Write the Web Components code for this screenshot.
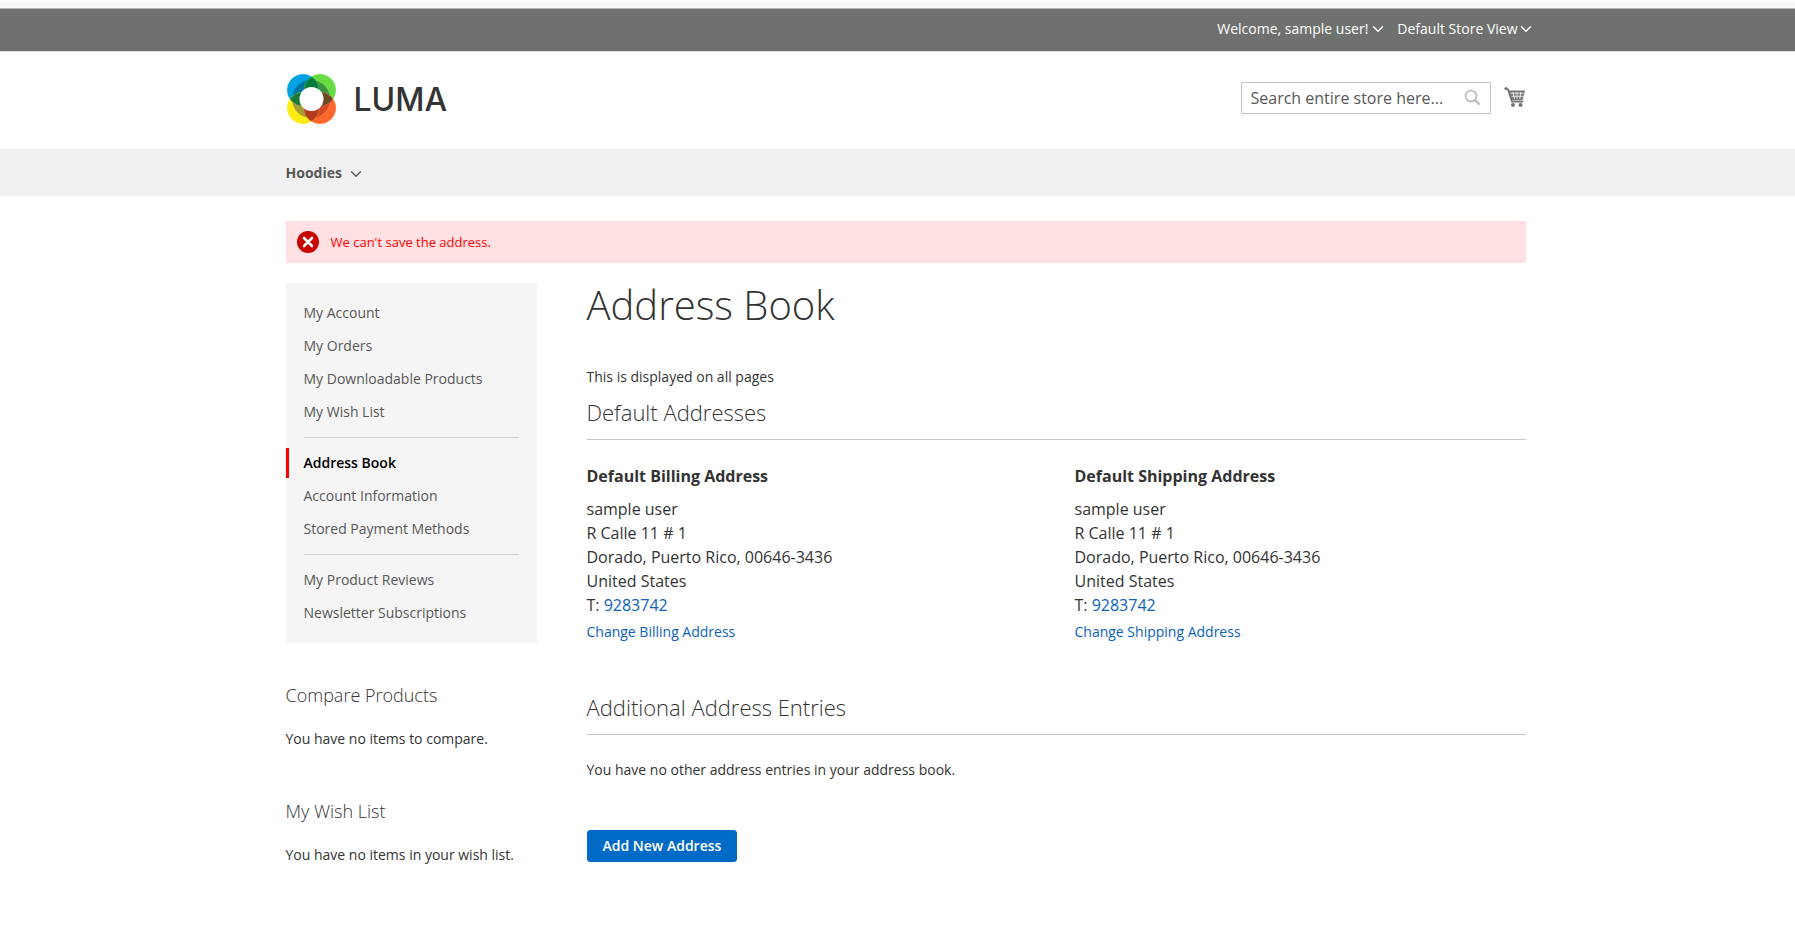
<!DOCTYPE html>
<html lang="en">
<head>
<meta charset="utf-8">
<title>Address Book</title>
<style>
body{margin:0;background:#fff;color:#333;font:14px/20px "Open Sans",sans-serif}
</style>
</head>
<body>
<luma-page></luma-page>
<script>
const define = (name, css, html) => customElements.define(name, class extends HTMLElement {
  constructor() {
    super();
    const t = document.createElement('template');
    t.innerHTML = `<style>*{box-sizing:border-box}:host{display:block}a{color:#0a62bd;text-decoration:none}button{font:inherit;cursor:pointer}${css}</style>${html}`;
    this.attachShadow({mode: 'open'}).append(t.content.cloneNode(true));
  }
});

define('luma-container',
  `:host{padding-left:16px}div{max-width:var(--content-width,1240px);margin:0 auto}`,
  `<div><slot></slot></div>`);

define('luma-chevron',
  `:host{display:inline-flex}svg{display:block;width:var(--chevron-width,12px);height:8px}`,
  `<svg viewBox="0 0 12 8" fill="none" stroke="currentColor" stroke-width="1.4" stroke-linecap="round" stroke-linejoin="round"><path d="M1.500 1.800 6 6.200l4.500-4.400"/></svg>`);

define('luma-topbar',
  `:host{border-top:6px solid #f8f8f8;margin-top:2px}
  .bar{background:#6e716e;border-top:1px solid #b5b7b5;border-bottom:1px solid #dcdddc;--content-width:1252px}
  .row{display:flex;justify-content:flex-end;gap:13px;height:42px;align-items:center}
  button{display:flex;align-items:center;gap:4px;background:none;border:0;padding:0 0 2px;color:#fff}
  .store{gap:2px}`,
  `<div class="bar"><luma-container><div class="row">
    <button type="button">Welcome, sample user! <luma-chevron></luma-chevron></button>
    <button class="store" type="button">Default Store View <luma-chevron></luma-chevron></button>
  </div></luma-container></div>`);

define('luma-logo',
  `a{display:flex;align-items:center;gap:16px;color:#333;font:500 32px/48px Inter,sans-serif}svg{display:block}span{padding-top:4px}`,
  `<a href="#" aria-label="Luma home"><svg width="52" height="52" viewBox="1 0 52 52">
    <defs><clipPath id="ring"><circle cx="26" cy="27" r="19"/></clipPath>
    <clipPath id="blue"><circle cx="18" cy="18" r="16"/></clipPath>
    <clipPath id="orange"><circle cx="35" cy="36" r="16"/></clipPath></defs>
    <circle cx="18" cy="18" r="16" fill="#00a4e4"/><circle cx="35" cy="18" r="16" fill="#69db45"/>
    <circle cx="18" cy="36" r="16" fill="#ffeb14"/><circle cx="35" cy="36" r="16" fill="#ff682c"/>
    <g clip-path="url(#ring)">
      <circle cx="18" cy="18" r="16" fill="#0075a2"/><circle cx="35" cy="18" r="16" fill="#3c9440"/>
      <circle cx="18" cy="36" r="16" fill="#a89b33"/><circle cx="35" cy="36" r="16" fill="#d04a25"/>
    </g>
    <g clip-path="url(#blue)"><circle cx="35" cy="18" r="16" fill="#007c3c"/><circle cx="18" cy="36" r="16" fill="#177a36"/></g>
    <g clip-path="url(#orange)"><circle cx="35" cy="18" r="16" fill="#6c4a20"/><circle cx="18" cy="36" r="16" fill="#b33a1b"/></g>
    <g fill="none" stroke="#fff" stroke-opacity=".25" stroke-width=".7"><circle cx="18" cy="18" r="16"/><circle cx="35" cy="18" r="16"/><circle cx="18" cy="36" r="16"/><circle cx="35" cy="36" r="16"/></g>
    <circle cx="26.500" cy="27" r="12" fill="#fff"/></svg><span>LUMA</span></a>`);

define('luma-search',
  `:host{width:250px}form{display:flex;position:relative}
  input{width:100%;height:32px;border:1px solid #c2c2c2;border-radius:1px;padding:0 35px 0 9px;font:16px/24px "Open Sans",sans-serif;color:#575757;background:#fff}
  input::placeholder{color:#575757;opacity:1}
  button{position:absolute;right:10px;top:7px;padding:0;border:0;background:none;display:flex}`,
  `<form><input type="text" aria-label="Search" placeholder="Search entire store here...">
  <button type="button" aria-label="Search"><svg width="17" height="17" viewBox="0 0 17 17" fill="none" stroke="#b8b8b8" stroke-width="1.600"><circle cx="7" cy="7" r="5.500"/><path d="m11 11 4.500 4.500" stroke-width="2.200"/></svg></button></form>`);

define('luma-header',
  `.row{display:flex;align-items:center;height:97px;padding-bottom:5px}luma-logo{flex:1}
  .cart{display:flex;margin-left:13px}`,
  `<luma-container><div class="row"><luma-logo></luma-logo><luma-search></luma-search>
  <a class="cart" href="#" aria-label="My Cart"><svg width="22" height="22" viewBox="0 0 22 22"><path d="M1.500 1.500 4 2.500l4 12h10.500" fill="none" stroke="#757575" stroke-width="1.800" stroke-linecap="round"/><circle cx="2" cy="1.500" r="1.500" fill="#757575"/><path d="M4.500 3.500H21l-2.500 9.500H7.500z" fill="#757575"/><path d="M6.500 6.200h13M7.500 9.300h11.500M9 5l1.500 7M13 5v7M16.800 5l-1 7" fill="none" stroke="#fff" stroke-width=".8"/><circle cx="9" cy="18" r="2" fill="#757575"/><circle cx="16.500" cy="18" r="2" fill="#757575"/></svg></a></div></luma-container>`);

define('luma-nav',
  `:host{background:#f0f0f0}nav{display:flex;align-items:center;height:47px;--chevron-width:14px}
  a{display:flex;align-items:center;gap:7px;font-weight:700;color:#575757}luma-chevron{margin-top:2px}svg{height:9px}`,
  `<luma-container><nav><a href="#">Hoodies <luma-chevron></luma-chevron></a></nav></luma-container>`);

define('luma-message',
  `:host{margin-top:25px}div{display:flex;align-items:center;gap:12px;padding:12px 11px;background:#ffe1e3;color:#f00;font-size:13px;line-height:18px}
  svg{display:block;margin:-2px 0}`,
  `<div role="alert"><svg width="22" height="22" viewBox="0 0 22 22"><circle cx="11" cy="11" r="11" fill="#c70000"/><path d="m7 7 8 8m0-8-8 8" stroke="#fff" stroke-width="2.600" stroke-linecap="round"/></svg><span><slot></slot></span></div>`);

define('account-nav',
  `:host{background:#f5f5f5;padding:15px 0}ul{list-style:none;margin:0;padding:0;display:grid;row-gap:3px}
  ul+ul::before{content:"";height:1px;background:#d1d1d1;margin:7px 18px}ul+ul{padding-top:3px}
  a{display:block;color:#575757;padding:5px 15px;border-left:3px solid transparent}
  a[aria-current]{border-color:#f00;color:#000;font-weight:600}`,
  `<nav><ul><li><a href="#">My Account</a></li><li><a href="#">My Orders</a></li><li><a href="#">My Downloadable Products</a></li><li><a href="#">My Wish List</a></li></ul>
  <ul><li><a href="#" aria-current="page">Address Book</a></li><li><a href="#">Account Information</a></li><li><a href="#">Stored Payment Methods</a></li></ul>
  <ul><li><a href="#">My Product Reviews</a></li><li><a href="#">Newsletter Subscriptions</a></li></ul></nav>`);

define('side-block',
  `h2{font-weight:300;font-size:18px;line-height:20px;margin:0 0 24px}p{margin:0}`,
  `<h2><slot name="title"></slot></h2><p><slot></slot></p>`);

define('section-block',
  `h2{font-weight:300;font-size:22px;line-height:24px;margin:0 0 25px;padding-bottom:15px;border-bottom:1px solid #c6c6c6}`,
  `<h2><slot name="title"></slot></h2><slot></slot>`);

define('address-card',
  `h3{font-size:16px;line-height:22px;font-weight:700;margin:0 0 10px}address{font-style:normal;font-size:16px;line-height:24px;margin-bottom:5px}::slotted(a){color:#0a62bd;text-decoration:none}`,
  `<h3><slot name="title"></slot></h3><address>sample user<br>R Calle 11 # 1<br>Dorado, Puerto Rico, 00646-3436<br>United States<br>T: <a href="tel:9283742">9283742</a></address><slot name="action"></slot>`);

define('luma-page',
  `.columns{display:flex;gap:50px;margin-top:20px;align-items:flex-start}
  aside{width:251px;flex:none}aside side-block{margin-top:52px}aside account-nav+side-block{margin-top:42px}
  main{flex:1;min-width:0;display:flex;flex-direction:column;align-items:stretch}
  h1{font-weight:300;font-size:40px;line-height:44px;margin:0 0 40px}p{margin:0}
  section-block{margin-top:13px}section-block+section-block{margin-top:53px}
  .cards{display:grid;grid-template-columns:1fr 1fr;gap:37px}
  .add{align-self:flex-start;margin:50px 0 64px;background:#006bc6;color:#fff;border:1px solid #006bc6;border-radius:3px;padding:5px 15px;font-weight:600}`,
  `<luma-topbar></luma-topbar><luma-header></luma-header><luma-nav></luma-nav>
  <luma-container><luma-message>We can't save the address.</luma-message>
  <div class="columns"><aside><account-nav></account-nav>
    <side-block><span slot="title">Compare Products</span>You have no items to compare.</side-block>
    <side-block><span slot="title">My Wish List</span>You have no items in your wish list.</side-block></aside>
  <main><h1>Address Book</h1><p>This is displayed on all pages</p>
    <section-block><span slot="title">Default Addresses</span><div class="cards">
      <address-card><span slot="title">Default Billing Address</span><a slot="action" href="#">Change Billing Address</a></address-card>
      <address-card><span slot="title">Default Shipping Address</span><a slot="action" href="#">Change Shipping Address</a></address-card></div></section-block>
    <section-block><span slot="title">Additional Address Entries</span><p>You have no other address entries in your address book.</p></section-block>
    <button class="add" type="button">Add New Address</button></main></div></luma-container>`);
</script>
</body>
</html>
